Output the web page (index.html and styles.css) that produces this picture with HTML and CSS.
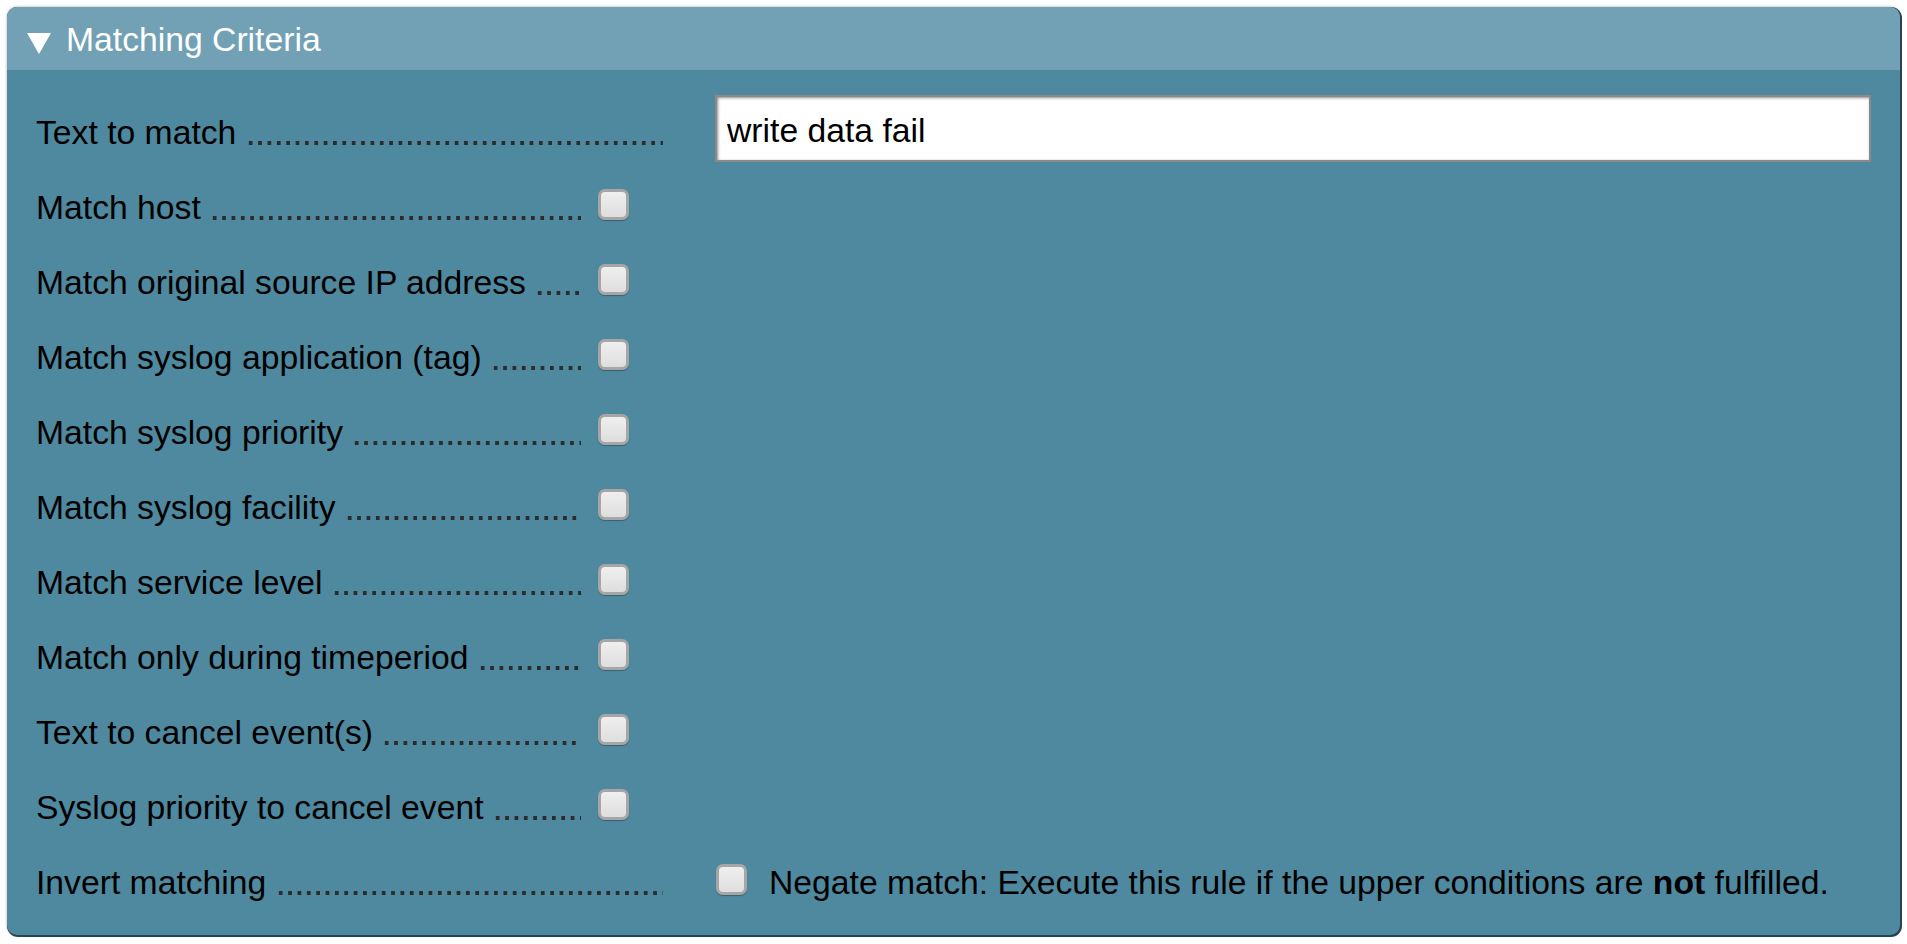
FILE: index.html
```html
<!DOCTYPE html>
<html>
<head>
<meta charset="utf-8">
<link rel="stylesheet" href="styles.css">
</head>
<body>
<div class="panel">
  <div class="head">
    <svg class="tri" width="24" height="21" viewBox="0 0 24 21"><polygon points="0,0 24,0 12,21" fill="#fff"/></svg>
    <span class="title">Matching Criteria</span>
  </div>
  <div class="body">
    <div class="row">
      <div class="label"><span class="txt">Text to match</span><span class="dots"></span></div>
      <div class="content"><input class="textin" type="text" value="write data fail"></div>
    </div>
    <div class="row">
      <div class="label"><span class="txt">Match host</span><span class="dots"></span><span class="cb"></span></div>
    </div>
    <div class="row">
      <div class="label"><span class="txt">Match original source IP address</span><span class="dots"></span><span class="cb"></span></div>
    </div>
    <div class="row">
      <div class="label"><span class="txt">Match syslog application (tag)</span><span class="dots"></span><span class="cb"></span></div>
    </div>
    <div class="row">
      <div class="label"><span class="txt">Match syslog priority</span><span class="dots"></span><span class="cb"></span></div>
    </div>
    <div class="row">
      <div class="label"><span class="txt">Match syslog facility</span><span class="dots"></span><span class="cb"></span></div>
    </div>
    <div class="row">
      <div class="label"><span class="txt">Match service level</span><span class="dots"></span><span class="cb"></span></div>
    </div>
    <div class="row">
      <div class="label"><span class="txt">Match only during timeperiod</span><span class="dots"></span><span class="cb"></span></div>
    </div>
    <div class="row">
      <div class="label"><span class="txt">Text to cancel event(s)</span><span class="dots"></span><span class="cb"></span></div>
    </div>
    <div class="row">
      <div class="label"><span class="txt">Syslog priority to cancel event</span><span class="dots"></span><span class="cb"></span></div>
    </div>
    <div class="row">
      <div class="label"><span class="txt">Invert matching</span><span class="dots"></span></div>
      <div class="content negate"><span class="cb cb-neg"></span><span class="negtext">Negate match: Execute this rule if the upper conditions are <b>not</b> fulfilled.</span></div>
    </div>
  </div>
</div>
</body>
</html>
```

FILE: styles.css
```css
html, body {
  margin: 0;
  padding: 0;
  background: #ffffff;
}
body {
  font-family: "Liberation Sans", Arial, sans-serif;
  font-size: 33.7px;
  color: #000;
  width: 1907px;
  height: 944px;
  overflow: hidden;
}
.panel {
  margin: 7px 0 0 7px;
  width: 1893px;
  border-radius: 10px;
  background: #4f899f;
  box-shadow: 1px 1px 0 1px #264452, 0 0 3px rgba(0, 0, 0, 0.35);
  overflow: hidden;
}
.head {
  height: 63px;
  background: #72a1b5;
  display: flex;
  align-items: center;
  padding-left: 20px;
  box-sizing: border-box;
}
.tri {
  display: block;
  margin-top: 10px;
  margin-right: 15px;
  flex: none;
}
.title {
  color: #fff;
  line-height: 38px;
  margin-top: 1px;
}
.body {
  padding: 43px 29px 34px 29px;
  display: flex;
  flex-direction: column;
  gap: 37px;
}
.row {
  display: flex;
  align-items: flex-start;
  height: 38px;
  line-height: 38px;
}
.label {
  width: 627px;
  flex: none;
  display: flex;
  align-items: flex-start;
  white-space: nowrap;
}
.txt {
  flex: none;
}
.dots {
  flex: 1 1 0;
  min-width: 0;
  height: 38px;
  margin-left: 9.37px;
  background-image: linear-gradient(to right, transparent 3px, #2c2c2c 3px, #2c2c2c 6.5px, transparent 6.5px);
  background-size: 9.37px 3.5px;
  background-repeat: repeat-x;
  background-position: 0 27.5px;
}
.cb {
  flex: none;
  display: block;
  width: 31px;
  height: 31px;
  box-sizing: border-box;
  margin: 1px 34px 0 17px;
  border-radius: 7px;
  border: 3px solid #a6a6a6;
  background: linear-gradient(#efefef, #dedede);
  box-shadow: 0 1px 1px rgba(0, 0, 0, 0.3);
}
.content {
  margin-left: 52px;
  flex: 1 1 auto;
  display: flex;
  align-items: flex-start;
}
.textin {
  display: block;
  width: 100%;
  height: 67px;
  margin: -18px 0 0 0;
  box-sizing: border-box;
  border: 2px solid #8a8a8a;
  box-shadow: inset 1px 1px 3px rgba(0, 0, 0, 0.45);
  background: #fff;
  font-family: "Liberation Sans", Arial, sans-serif;
  font-size: 33.7px;
  color: #000;
  padding: 3px 10px 0 10px;
  outline: none;
}
.cb-neg {
  margin: 1px 22px 0 1px;
}
.negtext {
  white-space: nowrap;
}
```
